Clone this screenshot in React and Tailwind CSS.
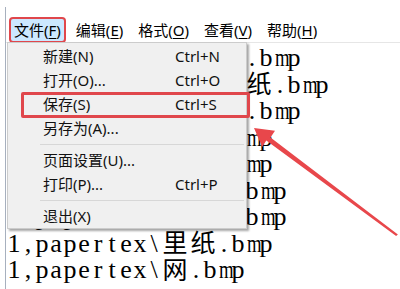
import React from "react";

const BAR = [
  ["文件", "F"],
  ["编辑", "E"],
  ["格式", "O"],
  ["查看", "V"],
  ["帮助", "H"],
];

const LINES = [
  "1,papertex\\牛皮纸.bmp",
  "1,papertex\\白色卡纸.bmp",
  "1,papertex\\再生纸.bmp",
  "1,papertex\\布纹.bmp",
  "1,papertex\\麻布.bmp",
  "1,papertex\\纹理2.bmp",
  "1,papertex\\纹理3.bmp",
  "1,papertex\\里纸.bmp",
  "1,papertex\\网.bmp",
];

function cellClass(ch) {
  if (ch.charCodeAt(0) > 255) return "inline-block w-[28px] shrink-0 text-center text-[25px]";
  if (ch === "m" || ch === "w") return "inline-block w-[14px] shrink-0 text-center text-[26px] scale-x-[0.72]";
  return "inline-block w-[14px] shrink-0 text-center text-[26px]";
}

function TextLine({ text }) {
  return (
    <div className="flex h-[26.5px] items-center whitespace-nowrap">
      {Array.from(text).map((ch, i) => (
        <span key={i} className={cellClass(ch)}>
          {ch}
        </span>
      ))}
    </div>
  );
}

function Item({ label, shortcut, boxed }) {
  return (
    <div className="relative flex h-[24px] items-center pl-[35px]">
      <span className="w-[132px] shrink-0">{label}</span>
      {shortcut && <span>{shortcut}</span>}
      {boxed && (
        <div className="absolute left-[13px] right-[-4px] top-0 bottom-[-2px] rounded-[2px] border-[3px] border-[#e0474c]" />
      )}
    </div>
  );
}

function Sep() {
  return (
    <div className="flex h-[8px] items-center pl-[32px] pr-[2px]">
      <div className="h-px flex-1 bg-[#d7d7d7]" />
    </div>
  );
}

export default function App() {
  return (
    <div className="relative h-[289px] w-[400px] overflow-hidden bg-white pl-[5px] pt-[7px] text-black">
      <div className="relative h-full border-l border-[#a7b0be]">
        {/* menu bar */}
        <div className="border-b border-[#e6e6e6] pt-[11px] font-['Noto_Sans','Noto_Sans_CJK_SC',sans-serif] text-[15px]">
          <div className="flex h-[24px] items-center gap-[9px] pl-[5px]">
            {BAR.map(([l, k], i) => (
              <div
                key={k}
                className={
                  i === 0
                    ? "flex h-[22px] items-center rounded-[2px] bg-[#cce8ff] px-[3px] ring-2 ring-[#e0474c]"
                    : "flex h-[22px] items-center px-[3px]"
                }
              >
                {l}(<span className="underline underline-offset-2">{k}</span>)
              </div>
            ))}
          </div>
        </div>

        {/* document text */}
        <div className="pl-[1px] pt-[2px] font-['Liberation_Serif','Noto_Sans_CJK_SC',serif] leading-none">
          {LINES.map((t, i) => (
            <TextLine key={i} text={t} />
          ))}
        </div>

        {/* dropdown */}
        <div className="absolute left-[1px] top-[35px] w-[240px] border border-[#cccccc] bg-[#f0f0f0] pt-[1px] font-['Noto_Sans','Noto_Sans_CJK_SC',sans-serif] text-[15px] text-[#111] shadow-[2px_2px_2px_rgba(0,0,0,0.35)]">
          <Item label="新建(N)" shortcut="Ctrl+N" />
          <Item label="打开(O)..." shortcut="Ctrl+O" />
          <Item label="保存(S)" shortcut="Ctrl+S" boxed />
          <Item label="另存为(A)..." />
          <Sep />
          <Item label="页面设置(U)..." />
          <Item label="打印(P)..." shortcut="Ctrl+P" />
          <Sep />
          <Item label="退出(X)" />
        </div>
      </div>

      {/* arrow */}
      <svg
        className="pointer-events-none absolute left-0 top-0"
        width="400"
        height="289"
        viewBox="0 0 400 289"
      >
        <polygon
          fill="#e8474b"
          points="254,128 275,130.8 270.5,137.4 397.9,234.5 396.1,236 266.3,140.4 262.2,147"
        />
      </svg>
    </div>
  );
}
